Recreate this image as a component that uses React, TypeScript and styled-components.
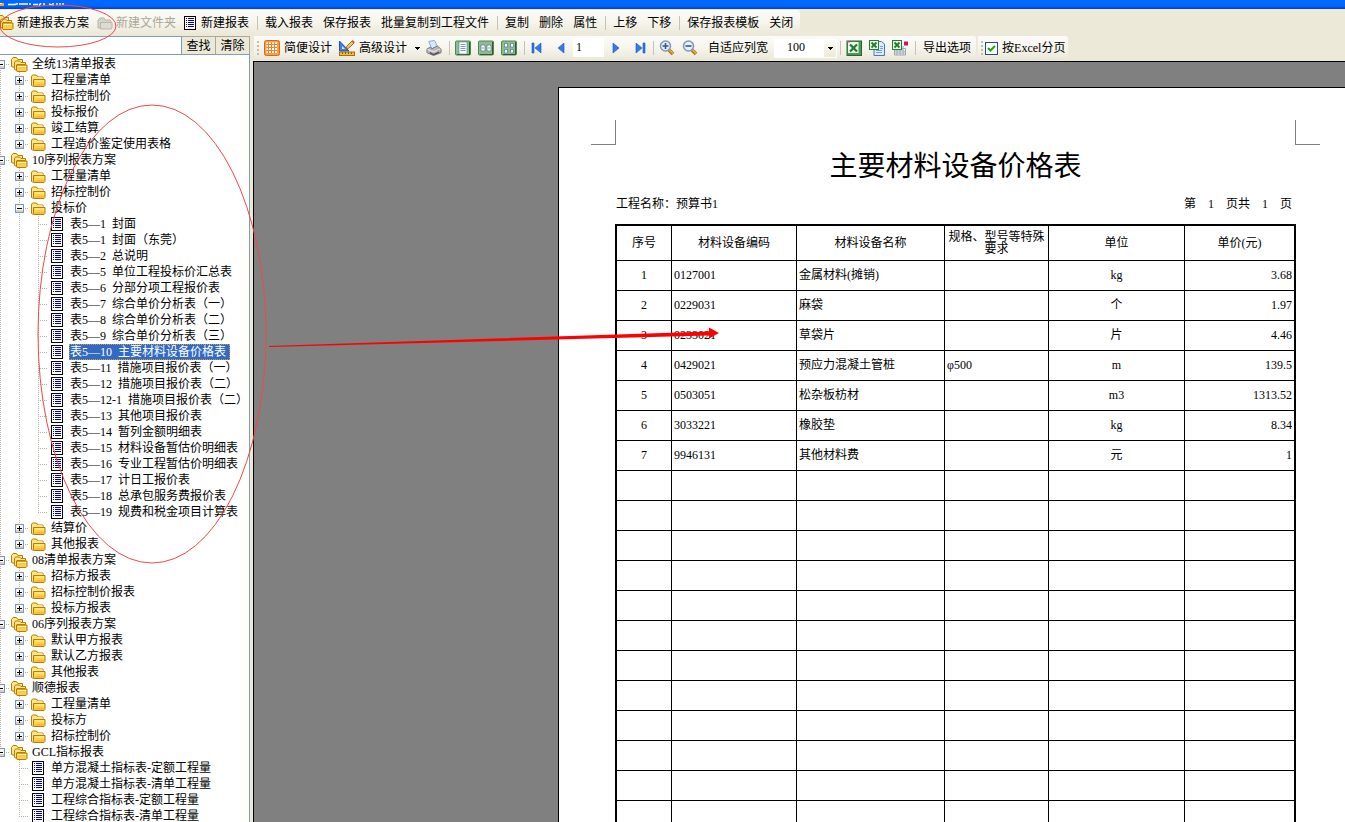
import React, { useState } from "react";
import styled, { createGlobalStyle, css } from "styled-components";

const GlobalStyle = createGlobalStyle`
  * { box-sizing: border-box; }
  html, body { margin: 0; height: 100%; overflow: hidden; }
  body, button, input, select {
    font-family: "Liberation Serif", "Noto Sans CJK SC", serif;
    font-size: 12px;
    line-height: 16px;
    color: #000;
  }
`;

const Shell = styled.div`
  position: relative;
  display: flex;
  flex-direction: column;
  height: 100vh;
  overflow: hidden;
  background: #ece9d8;
`;

const TitleBar = styled.header`
  flex: none;
  height: 9px;
  background: linear-gradient(#0068ff 0, #0066ff 6px, #0048d8 8px, #0040c8 9px);
`;

const strip = css`
  background: linear-gradient(#fcfbf8, #f6f4ec 50%, #ebe8d9);
  border-radius: 0 3px 3px 0;
`;

const MenuRow = styled.div`
  flex: none;
  display: flex;
  height: 27px;
  padding: 1px 0;
`;

const MenuBar = styled.nav`
  ${strip}
  display: flex;
  align-items: center;
  margin-left: -6px;
  padding-right: 2px;
`;

const ToolRow = styled.div`
  flex: none;
  display: flex;
  gap: 2px;
  height: 25px;
  padding-left: 1px;
`;

const ToolBar = styled.div`
  ${strip}
  display: flex;
  align-items: center;
  height: 24px;
`;

const Grip = styled.span`
  width: 2px;
  height: 14px;
  margin: 0 2px 0 3px;
  background: repeating-linear-gradient(#c1beb0 0 2px, transparent 2px 4px);
`;

const Separator = styled.span`
  width: 1px;
  height: 14px;
  margin: 0 2px 0 3px;
  background: #c5c2b8;
`;

const TextButton = styled.button<{ $pad?: number }>`
  display: flex;
  align-items: center;
  height: 22px;
  padding: 0 ${(p) => p.$pad ?? 5}px;
  border: 0;
  background: none;
  white-space: nowrap;
`;

const IconTextButton = styled(TextButton)<{ $gap?: number }>`
  gap: ${(p) => p.$gap ?? 3}px;
  padding: 0 ${(p) => (p.$gap === 4 ? 4 : 5)}px 0 3px;
  &:disabled { color: #aca899; }
`;

const IconButton = styled.button`
  display: flex;
  align-items: center;
  width: 23px;
  height: 22px;
  padding: 0 4px 0 3px;
  border: 0;
  background: none;
`;

const DropButton = styled(IconButton)`
  justify-content: center;
  width: 12px;
  padding: 0;
`;

const PageInput = styled.input`
  width: 31px;
  height: 19px;
  margin-bottom: 2px;
  padding: 0 3px;
  border: 0;
  background: #fff;
`;

const ZoomBox = styled.div`
  position: relative;
  display: flex;
  width: 63px;
  height: 19px;
`;

const ZoomSelect = styled.select`
  appearance: none;
  width: 100%;
  padding: 0 0 2px 13px;
  border: 0;
  border-radius: 0;
  background: #fff;
`;

const ZoomArrow = styled.span`
  position: absolute;
  top: 1px;
  right: 1px;
  bottom: 1px;
  display: flex;
  align-items: center;
  justify-content: center;
  width: 12px;
  background: linear-gradient(#fcfbf8, #ece9d8);
  pointer-events: none;
`;

const CheckLabel = styled.label`
  display: flex;
  align-items: center;
  gap: 4px;
  padding-right: 3px;
`;

const CheckBox = styled.input`
  appearance: none;
  width: 13px;
  height: 13px;
  margin: 0;
  border: 1px solid #1c5180;
  background: #fff;
  &:checked {
    background: #fff url("data:image/svg+xml,%3Csvg xmlns='http://www.w3.org/2000/svg' viewBox='0 0 11 11'%3E%3Cpath d='M2 5l2.5 2.5L9 3' fill='none' stroke='%2321a121' stroke-width='2'/%3E%3C/svg%3E");
  }
`;

const Workspace = styled.div`
  flex: 1;
  display: grid;
  grid-template-columns: 250px minmax(0, 1fr);
  gap: 3px;
  min-height: 0;
`;

const Sidebar = styled.aside`
  display: flex;
  flex-direction: column;
  min-height: 0;
`;

const SearchRow = styled.form`
  flex: none;
  display: flex;
  height: 18px;
`;

const SearchInput = styled.input`
  flex: 1;
  min-width: 0;
  padding: 0 3px;
  border: solid #7f9db9;
  border-width: 1px 1px 0 0;
  background: #fff;
`;

const SearchButton = styled.button`
  width: 34px;
  padding: 0;
  border: solid #aca899;
  border-width: 1px 1px 0 0;
  background: #ece9d8;
`;

const Tree = styled.ul`
  flex: 1;
  min-height: 0;
  margin: 0;
  padding: 1px 0 0;
  overflow: hidden;
  list-style: none;
  border: solid #7f9db9;
  border-width: 1px 1px 0 0;
  background: #fff;
`;

const TreeRow = styled.li`
  display: flex;
  align-items: center;
  height: 16px;
  margin-left: -9px;
  white-space: nowrap;
`;

type Line = "none" | "full" | "end" | "start";

const dotsDown = "repeating-linear-gradient(#b5b1a2 0 1px, transparent 1px 2px)";
const dotsAcross = "repeating-linear-gradient(90deg, #b5b1a2 0 1px, transparent 1px 2px)";

const Guide = styled.span<{ $line: Line; $branch?: boolean }>`
  flex: none;
  display: flex;
  align-items: center;
  justify-content: center;
  width: 19px;
  height: 16px;
  background-repeat: no-repeat;
  background-image: ${(p) => (p.$line === "none" ? "none" : dotsDown)},
    ${(p) => (p.$branch ? dotsAcross : "none")};
  background-position: 9px ${(p) => (p.$line === "start" ? 8 : 0)}px, 9px 8px;
  background-size: 1px ${(p) => (p.$line === "full" ? 16 : 8)}px, 10px 1px;
`;

const Expander = styled.button`
  display: flex;
  padding: 0;
  border: 0;
  background: none;
`;

const NodeIcon = styled.span`
  flex: none;
  display: flex;
  justify-content: center;
  width: 18px;
  margin-right: 3px;
`;

const NodeLabel = styled.span<{ $selected: boolean }>`
  height: 16px;
  padding: 0 4px 0 1px;
  ${(p) =>
    p.$selected &&
    css`
      color: #fff;
      background: #316ac5;
      outline: 1px dotted #d09a40;
      outline-offset: -1px;
    `}
`;

const Main = styled.main`
  display: flex;
  flex-direction: column;
  min-width: 0;
  min-height: 0;
`;

const Viewer = styled.section`
  flex: 1;
  display: flex;
  align-items: flex-start;
  min-height: 0;
  padding: 25px 0 0 304px;
  overflow: hidden;
  border: solid #000;
  border-width: 1px 0 0 1px;
  background: #808080;
`;

const Paper = styled.article`
  flex: none;
  padding: 32px;
  border: 1px solid #000;
  background: #fff;
`;

const Corners = styled.div`
  display: flex;
  justify-content: space-between;
`;

const Corner = styled.span<{ $side: "left" | "right" }>`
  width: 25px;
  height: 25px;
  border-bottom: 1px solid #808080;
  ${(p) => (p.$side === "left" ? "border-right" : "border-left")}: 1px solid #808080;
`;

const ReportBody = styled.div`
  padding: 4px 24px 0;
`;

const ReportTitle = styled.h1`
  margin: 0;
  font-size: 28px;
  font-weight: 400;
  line-height: 36px;
  text-align: center;
`;

const Meta = styled.div`
  display: flex;
  align-items: center;
  justify-content: space-between;
  height: 39px;
  padding: 0 4px 2px 1px;
`;

const ReportTable = styled.table`
  table-layout: fixed;
  width: 681px;
  border: 2px solid #000;
  border-collapse: separate;
  border-spacing: 0;
`;

const Cell = styled.td<{ $align?: "left" | "center" | "right" }>`
  height: 30px;
  padding: 0 2px 2px;
  border: solid #000;
  border-width: 0 1px 1px 0;
  text-align: ${(p) => p.$align ?? "left"};
  &:last-child { border-right: 0; }
`;

const HeadCell = styled.th`
  height: 35px;
  padding: 0 2px;
  border: solid #000;
  border-width: 0 1px 1px 0;
  font-weight: 400;
  line-height: 12px;
  &:last-child { border-right: 0; }
`;

const Annotations = styled.svg`
  position: absolute;
  top: 0;
  left: 0;
  width: 100%;
  height: 100%;
  pointer-events: none;
`;

/* ---------- icons ---------- */

const FolderIcon = () => (
  <svg width="16" height="14" viewBox="0 0 16 14">
    <path d="M1.5 12.5v-9l1-1.5h4l1.500 2h5v2" fill="#ffe680" stroke="#b57d0a" />
    <path d="M1.500 12.500V4h11v2H4v6.500z" fill="#ffe680" />
    <path d="M1.500 3.500v8.500l1 1.500" fill="none" stroke="#b57d0a" />
    <path d="M3.500 13.500v-7h11.500v6l-1 1z" fill="#fbd34e" stroke="#b57d0a" />
    <path d="M5 8h9" stroke="#fff0a0" />
    <path d="M5 12h9" stroke="#f8bd35" strokeWidth="2" />
  </svg>
);

const FoldersIcon = () => (
  <svg width="17" height="15" viewBox="0 0 17 15">
    <path d="M.5 9.500v-7L2 .5h3.500L7 2.500h4.500v3H3.500v5z" fill="#ffe680" stroke="#b57d0a" />
    <path d="M3.500 12.500v-7l1-1.500h4L10 5.500h4.500v2H6v6z" fill="#ffe680" stroke="#b57d0a" />
    <path d="M5.500 13.500V8h10.500v5.500l-1 1h-9z" fill="#fbcf45" stroke="#b57d0a" />
    <path d="M7 9.500h8" stroke="#fff0a0" />
  </svg>
);

const MutedFolderIcon = () => (
  <svg width="16" height="14" viewBox="0 0 16 14">
    <path d="M1 12V4l2-2h4l1 2h5l1 2v6z" fill="#d5d3ca" stroke="#b9b6ab" />
    <path d="M3.500 13V6.500H15V12l-1 1z" fill="#dcdad2" stroke="#b9b6ab" />
  </svg>
);

const ReportIcon = () => (
  <svg width="12" height="14" viewBox="0 0 12 14" shapeRendering="crispEdges">
    <rect x="0" y="0" width="12" height="14" fill="#000" />
    <rect x="1" y="1" width="10" height="12" fill="#fff" />
    {[2, 4, 6, 8, 10].map((y) => (
      <g key={y} fill="#0000a0">
        <rect x="2" y={y} width="1" height="1" />
        <rect x="4" y={y} width="6" height="1" />
      </g>
    ))}
  </svg>
);

const BoxIcon = ({ open }: { open: boolean }) => (
  <svg width="9" height="9" viewBox="0 0 9 9" shapeRendering="crispEdges">
    <rect x="0" y="0" width="9" height="9" fill="#7898b5" />
    <rect x="1" y="1" width="7" height="7" fill="#f6f5f0" />
    <rect x="1" y="6" width="7" height="2" fill="#d6d2c6" />
    <rect x="2" y="4" width="5" height="1" fill="#000" />
    {!open && <rect x="4" y="2" width="1" height="5" fill="#000" />}
  </svg>
);

const CaretIcon = () => (
  <svg width="5" height="3" viewBox="0 0 5 3" shapeRendering="crispEdges">
    <path d="M0 0h5v1H4v1H3v1H2V2H1V1H0z" fill="#000" />
  </svg>
);

const GridIcon = () => (
  <svg width="16" height="16" viewBox="0 0 16 16">
    <rect x=".5" y=".5" width="15" height="15" rx="2" fill="#f08020" stroke="#d96a12" />
    {[3, 6, 9, 12].map((y) =>
      [3, 6, 9, 12].map((x) => (
        <rect key={`${x}-${y}`} x={x - 1} y={y - 1} width="2" height="2" fill="#fff" />
      ))
    )}
    <path d="M2 2h12v12H2z" fill="none" stroke="#ffb870" />
  </svg>
);

const DesignIcon = () => (
  <svg width="16" height="16" viewBox="0 0 16 16">
    <path d="M.5 1v10H10z" fill="#3f7ee8" stroke="#1f50b8" />
    <path d="M3 6v3h3z" fill="#e8f0ff" />
    <path d="M7 9l1-3 5-5 2 2-5 5z" fill="#f3c35c" stroke="#8b5a1c" strokeWidth=".8" />
    <path d="M13 .8l2.300 2" stroke="#d05848" strokeWidth="1.800" />
    <rect x=".5" y="12" width="15" height="3.500" fill="#f7bd3a" stroke="#a86c10" />
    <path d="M3.500 12.500v1.500M6.500 12.500v1.500M9.500 12.500v1.500M12.500 12.500v1.500" stroke="#7a4a08" />
  </svg>
);

const PrinterIcon = () => (
  <svg width="17" height="16" viewBox="0 0 17 16">
    <path d="M3 1l6-1 3 6-6 3z" fill="#d7e9ff" stroke="#7ea9dc" />
    <path d="M1 9l4-2 1 2 6-3 4 3v4l-8 3-7-3z" fill="#b9b9bd" stroke="#77777d" />
    <path d="M1.500 9.500L8 12l7.500-3" fill="none" stroke="#f0f0f2" />
    <path d="M4 13l4 2 6-2.500" fill="none" stroke="#505058" strokeWidth="1.500" />
    <rect x="12" y="10" width="2" height="1" fill="#e0a020" />
  </svg>
);

const ViewIcon = ({ kind }: { kind: 1 | 2 | 4 }) => (
  <svg width="16" height="16" viewBox="0 0 16 16">
    <rect x=".5" y="1" width="15" height="14" rx="1" fill="#8fbd8a" stroke="#4d8a50" />
    <path d="M14.500 2v12.500H2" fill="none" stroke="#285c30" />
    {kind === 1 && (
      <>
        <rect x="4" y="2" width="8" height="12" fill="#fff" stroke="#5a7cb0" strokeWidth=".6" />
        <path d="M5.500 4.500h5M5.500 6.500h5M5.500 8.500h5M5.500 10.500h5" stroke="#7898c8" />
      </>
    )}
    {kind === 2 && (
      <>
        <path d="M3 5h3l1 1v5H3zM9 5h3l1 1v5H9z" fill="#fff" stroke="#4f70a8" strokeWidth=".7" />
        <path d="M4 8h2M10 8h2" stroke="#7898c8" />
      </>
    )}
    {kind === 4 && (
      <path
        d="M3.500 3.500h3v3.500h-3zM9.500 3.500h3v3.500h-3zM3.500 9.500h3V13h-3zM9.500 9.500h3V13h-3z"
        fill="#fff"
        stroke="#4f70a8"
        strokeWidth=".7"
      />
    )}
  </svg>
);

const NavIcon = ({ d }: { d: string }) => (
  <svg width="16" height="16" viewBox="0 0 16 16">
    <path d={d} fill="#2f7af0" stroke="#1a55c8" strokeWidth=".6" />
  </svg>
);

const ZoomIcon = ({ plus }: { plus?: boolean }) => (
  <svg width="16" height="16" viewBox="0 0 16 16">
    <path d="M10 10l4 4" stroke="#a87414" strokeWidth="3.500" />
    <path d="M10.500 10l3.500 3.500" stroke="#e8b440" strokeWidth="1.500" />
    <circle cx="6.500" cy="6" r="5" fill="#e6f1ff" stroke="#8296b8" strokeWidth="1.500" />
    <path d={plus ? "M3.500 6h6M6.500 3v6" : "M3.500 6h6"} stroke="#3a5688" strokeWidth="1.600" />
  </svg>
);

const ExcelIcon = () => (
  <svg width="16" height="16" viewBox="0 0 16 16">
    <rect x="1" y="1" width="14.500" height="14.500" fill="#4c9850" stroke="#226a2c" />
    <rect x="2" y="2" width="10.500" height="11" fill="#eef7ec" />
    <path d="M4 4.500l7 7M11 4.500l-7 7" stroke="#1f7a2c" strokeWidth="2.200" />
    <path d="M1 2h3" stroke="#e040e0" />
  </svg>
);

const ExcelDocIcon = ({ sheet }: { sheet?: boolean }) => (
  <svg width="16" height="16" viewBox="0 0 16 16">
    {sheet ? (
      <>
        <path d="M2.500 8.500h11v6.500h-11zM2.500 11h11M2.500 13h11M5 8v7M8 8v7M11 6v9" fill="#fff" stroke="#9aa6bc" />
        <rect x="12" y="1.500" width="4" height="4" fill="#c81860" />
      </>
    ) : (
      <>
        <path d="M5 1.500h7.500L15.500 4v11.500H5z" fill="#dcebff" stroke="#4a78c0" />
        <path d="M7 10.500h6M7 12.500h6M11 6.500h3M11 8.500h3" stroke="#7aa0d8" />
      </>
    )}
    <rect x=".5" y=".5" width="9" height="9" fill="#e8f5e6" stroke="#2b7a34" />
    <path d="M2.500 2.500l5 5M7.500 2.500l-5 5" stroke="#1f7a2c" strokeWidth="1.800" />
  </svg>
);

/* ---------- report tree ---------- */

interface TreeNode {
  label: string;
  children?: TreeNode[];
  folder?: boolean;
}

const folders = (...labels: string[]): TreeNode[] =>
  labels.map((label) => ({ label, folder: true }));
const leaves = (...labels: string[]): TreeNode[] => labels.map((label) => ({ label }));

const tree: TreeNode[] = [
  {
    label: "全统13清单报表",
    children: folders("工程量清单", "招标控制价", "投标报价", "竣工结算", "工程造价鉴定使用表格"),
  },
  {
    label: "10序列报表方案",
    children: [
      ...folders("工程量清单", "招标控制价"),
      {
        label: "投标价",
        children: leaves(
          "表5—1\u2002封面",
          "表5—1\u2002封面（东莞）",
          "表5—2\u2002总说明",
          "表5—5\u2002单位工程投标价汇总表",
          "表5—6\u2002分部分项工程报价表",
          "表5—7\u2002综合单价分析表（一）",
          "表5—8\u2002综合单价分析表（二）",
          "表5—9\u2002综合单价分析表（三）",
          "表5—10\u2002主要材料设备价格表",
          "表5—11\u2002措施项目报价表（一）",
          "表5—12\u2002措施项目报价表（二）",
          "表5—12-1\u2002措施项目报价表（二）",
          "表5—13\u2002其他项目报价表",
          "表5—14\u2002暂列金额明细表",
          "表5—15\u2002材料设备暂估价明细表",
          "表5—16\u2002专业工程暂估价明细表",
          "表5—17\u2002计日工报价表",
          "表5—18\u2002总承包服务费报价表",
          "表5—19\u2002规费和税金项目计算表"
        ),
      },
      ...folders("结算价", "其他报表"),
    ],
  },
  { label: "08清单报表方案", children: folders("招标方报表", "招标控制价报表", "投标方报表") },
  { label: "06序列报表方案", children: folders("默认甲方报表", "默认乙方报表", "其他报表") },
  { label: "顺德报表", children: folders("工程量清单", "投标方", "招标控制价") },
  {
    label: "GCL指标报表",
    children: leaves(
      "单方混凝土指标表-定额工程量",
      "单方混凝土指标表-清单工程量",
      "工程综合指标表-定额工程量",
      "工程综合指标表-清单工程量"
    ),
  },
];

interface NodesProps {
  nodes: TreeNode[];
  parents: Line[];
  selected: string;
  onSelect: (label: string) => void;
}

const Nodes = ({ nodes, parents, selected, onSelect }: NodesProps) => (
  <>
    {nodes.map((node, i) => {
      const last = i === nodes.length - 1;
      const first = i === 0 && parents.length === 0;
      const expandable = Boolean(node.children || node.folder);
      const Icon = parents.length === 0 ? FoldersIcon : expandable ? FolderIcon : ReportIcon;
      return (
        <React.Fragment key={node.label}>
          <TreeRow
            role="treeitem"
            aria-level={parents.length + 1}
            aria-selected={node.label === selected}
            onClick={() => onSelect(node.label)}
          >
            {parents.map((line, depth) => (
              <Guide key={depth} $line={line} />
            ))}
            <Guide $line={first ? "start" : last ? "end" : "full"} $branch>
              {expandable && (
                <Expander type="button" aria-label={node.children ? "收起" : "展开"}>
                  <BoxIcon open={Boolean(node.children)} />
                </Expander>
              )}
            </Guide>
            <NodeIcon>
              <Icon />
            </NodeIcon>
            <NodeLabel $selected={node.label === selected}>{node.label}</NodeLabel>
          </TreeRow>
          {node.children && (
            <Nodes
              nodes={node.children}
              parents={[...parents, last ? "none" : "full"]}
              selected={selected}
              onSelect={onSelect}
            />
          )}
        </React.Fragment>
      );
    })}
  </>
);

/* ---------- report data ---------- */

const columns = [
  { title: "序号", width: 55, align: "center" },
  { title: "材料设备编码", width: 125, align: "left" },
  { title: "材料设备名称", width: 148, align: "left" },
  { title: "规格、型号等特殊要求", width: 104, align: "left" },
  { title: "单位", width: 136, align: "center" },
  { title: "单价(元)", width: 109, align: "right" },
] as const;

const materials = [
  ["1", "0127001", "金属材料(摊销)", "", "kg", "3.68"],
  ["2", "0229031", "麻袋", "", "个", "1.97"],
  ["3", "0233021", "草袋片", "", "片", "4.46"],
  ["4", "0429021", "预应力混凝土管桩", "φ500", "m", "139.5"],
  ["5", "0503051", "松杂板枋材", "", "m3", "1313.52"],
  ["6", "3033221", "橡胶垫", "", "kg", "8.34"],
  ["7", "9946131", "其他材料费", "", "元", "1"],
];

const blankRows = Array.from({ length: 15 }, () => columns.map(() => ""));

const menuGroups = [
  ["载入报表", "保存报表", "批量复制到工程文件"],
  ["复制", "删除", "属性"],
  ["上移", "下移"],
  ["保存报表模板", "关闭"],
];

export default function App() {
  const [selected, setSelected] = useState("表5—10\u2002主要材料设备价格表");

  return (
    <Shell>
      <GlobalStyle />
      <TitleBar>
        <svg width="66" height="9" viewBox="0 0 66 9">
          <path d="M0 0h4v3H0z" fill="#f7a51c" />
          <path d="M0 0h2v1H0z" fill="#fff3b8" />
          <path
            d="M8 1.500h7l3-1M19 1h9M30 0v2M33 1.500h5M41 0l-2 2.500M44 0v2.500M49 1l3 1M53 0v3M57 0v2.500M60 0v2.500M63 0v2"
            fill="none"
            stroke="#fff"
            strokeWidth="1.500"
          />
        </svg>
      </TitleBar>

      <MenuRow>
        <MenuBar>
          <IconTextButton type="button">
            <FoldersIcon />
            新建报表方案
          </IconTextButton>
          <IconTextButton type="button" disabled>
            <MutedFolderIcon />
            新建文件夹
          </IconTextButton>
          <IconTextButton type="button" $gap={5}>
            <ReportIcon />
            新建报表
          </IconTextButton>
          {menuGroups.map((group) => (
            <React.Fragment key={group[0]}>
              <Separator />
              {group.map((item) => (
                <TextButton key={item} type="button">
                  {item}
                </TextButton>
              ))}
            </React.Fragment>
          ))}
        </MenuBar>
      </MenuRow>

      <Workspace>
        <Sidebar>
          <SearchRow onSubmit={(e) => e.preventDefault()}>
            <SearchInput type="text" aria-label="查找报表" />
            <SearchButton type="submit">查找</SearchButton>
            <SearchButton type="reset">清除</SearchButton>
          </SearchRow>
          <Tree role="tree">
            <Nodes nodes={tree} parents={[]} selected={selected} onSelect={setSelected} />
          </Tree>
        </Sidebar>

        <Main>
          <ToolRow>
            <ToolBar role="toolbar">
              <Grip />
              <IconTextButton type="button" $gap={4}>
                <GridIcon />
                简便设计
              </IconTextButton>
              <IconTextButton type="button" $gap={4}>
                <DesignIcon />
                高级设计
              </IconTextButton>
              <DropButton type="button" aria-label="更多设计">
                <CaretIcon />
              </DropButton>
              <IconButton type="button" aria-label="打印">
                <PrinterIcon />
              </IconButton>
              <Separator />
              <IconButton type="button" aria-label="单页">
                <ViewIcon kind={1} />
              </IconButton>
              <IconButton type="button" aria-label="双页">
                <ViewIcon kind={2} />
              </IconButton>
              <IconButton type="button" aria-label="四页">
                <ViewIcon kind={4} />
              </IconButton>
              <Separator />
              <IconButton type="button" aria-label="首页">
                <NavIcon d="M2 3h2v10H2zM11 3v10L5 8z" />
              </IconButton>
              <IconButton type="button" aria-label="上一页">
                <NavIcon d="M11 3v10L5 8z" />
              </IconButton>
              <PageInput type="text" defaultValue="1" aria-label="页码" />
              <IconButton type="button" aria-label="下一页">
                <NavIcon d="M6 3v10l6-5z" />
              </IconButton>
              <IconButton type="button" aria-label="末页">
                <NavIcon d="M6 3v10l6-5zM13 3h2v10h-2z" />
              </IconButton>
              <Separator />
              <IconButton type="button" aria-label="放大">
                <ZoomIcon plus />
              </IconButton>
              <IconButton type="button" aria-label="缩小">
                <ZoomIcon />
              </IconButton>
              <TextButton type="button" $pad={6}>
                自适应列宽
              </TextButton>
              <ZoomBox>
                <ZoomSelect aria-label="缩放比例" defaultValue="100">
                  <option>50</option>
                  <option>100</option>
                  <option>200</option>
                </ZoomSelect>
                <ZoomArrow>
                  <CaretIcon />
                </ZoomArrow>
              </ZoomBox>
              <Separator />
              <IconButton type="button" aria-label="导出到Excel">
                <ExcelIcon />
              </IconButton>
              <IconButton type="button" aria-label="导出到Excel文件">
                <ExcelDocIcon />
              </IconButton>
              <IconButton type="button" aria-label="导出到已有Excel">
                <ExcelDocIcon sheet />
              </IconButton>
              <Separator />
              <TextButton type="button">导出选项</TextButton>
            </ToolBar>
            <ToolBar role="toolbar">
              <Grip />
              <CheckLabel>
                <CheckBox type="checkbox" defaultChecked />
                按Excel分页
              </CheckLabel>
            </ToolBar>
          </ToolRow>

          <Viewer>
            <Paper>
              <Corners>
                <Corner $side="left" />
                <Corner $side="right" />
              </Corners>
              <ReportBody>
                <ReportTitle>主要材料设备价格表</ReportTitle>
                <Meta>
                  <span>工程名称：预算书1</span>
                  <span>第&#8194;&#8194;1&#8194;&#8194;页共&#8194;&#8194;1&#8194;&#8194;页</span>
                </Meta>
                <ReportTable>
                  <colgroup>
                    {columns.map((c) => (
                      <col key={c.title} width={c.width} />
                    ))}
                  </colgroup>
                  <thead>
                    <tr>
                      {columns.map((c) => (
                        <HeadCell key={c.title} scope="col">
                          {c.title}
                        </HeadCell>
                      ))}
                    </tr>
                  </thead>
                  <tbody>
                    {[...materials, ...blankRows].map((row, r) => (
                      <tr key={r}>
                        {row.map((value, c) => (
                          <Cell key={c} $align={columns[c].align}>
                            {value}
                          </Cell>
                        ))}
                      </tr>
                    ))}
                  </tbody>
                </ReportTable>
              </ReportBody>
            </Paper>
          </Viewer>
        </Main>
      </Workspace>

      <Annotations aria-hidden="true">
        <g fill="none" stroke="#f04848">
          <ellipse cx="58" cy="26" rx="58" ry="21" />
          <ellipse cx="152" cy="334" rx="114" ry="229" />
        </g>
        <path d="M269 346l440-14.500v-4l10 5.500-10 5.500v-3L269 347z" fill="#f00" />
      </Annotations>
    </Shell>
  );
}
